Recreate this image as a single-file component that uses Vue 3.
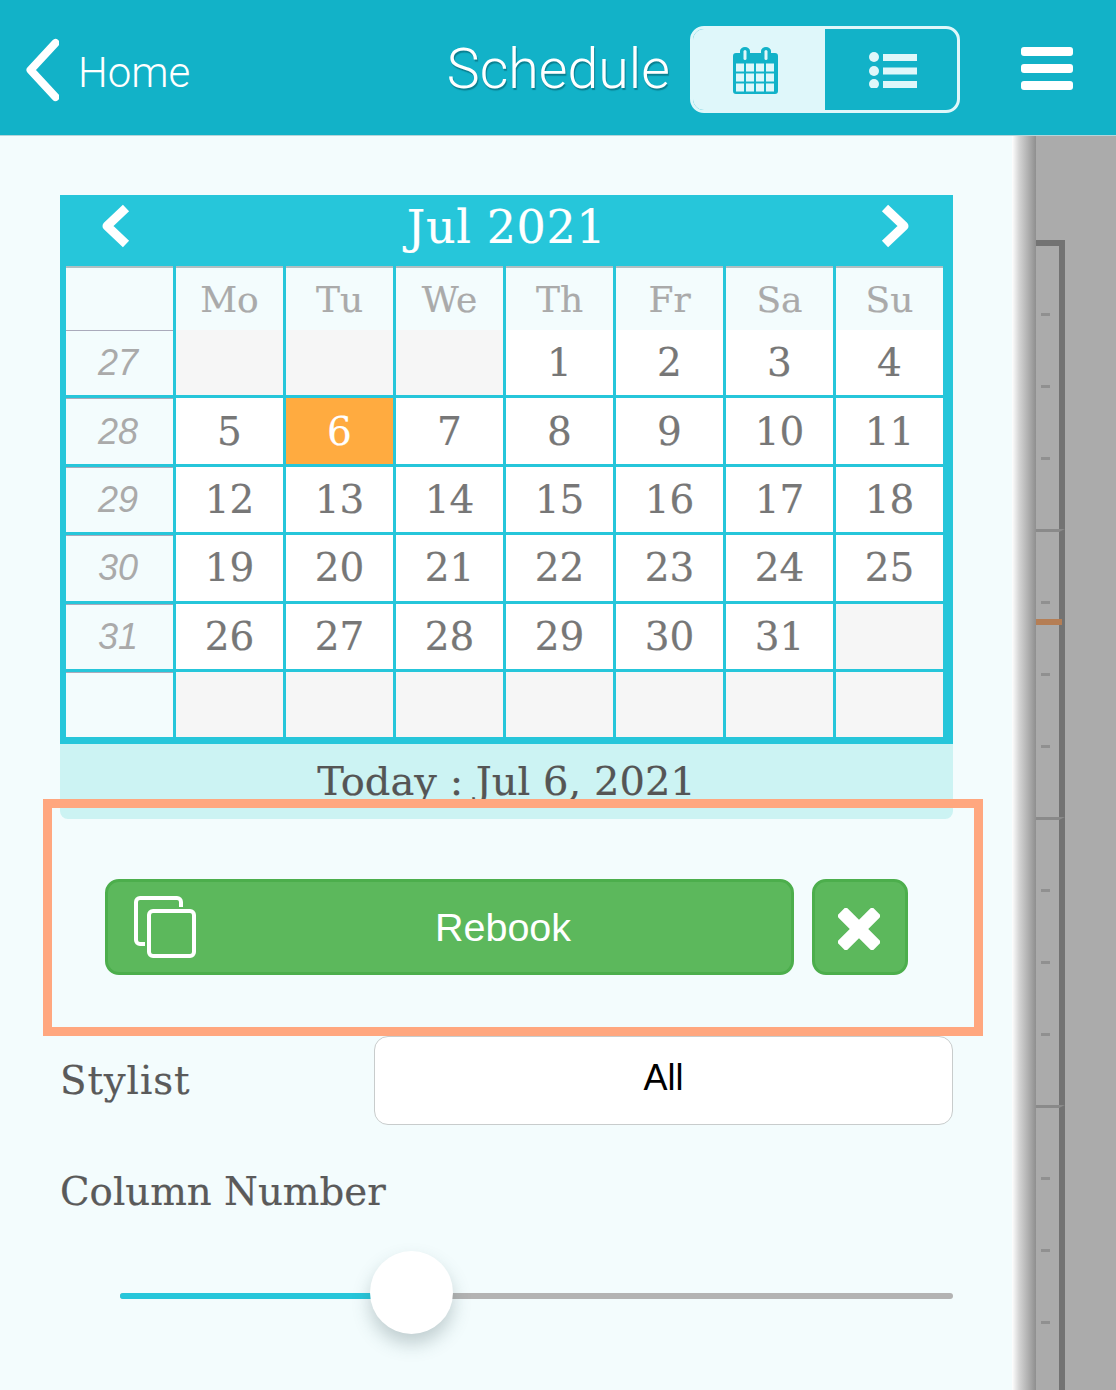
<template>
  <div class="app">
    <header class="topbar">
      <a class="back">
        <svg width="36" height="64" viewBox="0 0 36 64"><path d="M32.500 5 L7.500 32 L32.500 59" fill="none" stroke="#fff" stroke-width="8" stroke-linecap="round" stroke-linejoin="round" /></svg>
        <span>Home</span>
      </a>
      <h1 class="title">Schedule</h1>
      <div class="toggle">
        <div class="toggle-btn on">
          <svg class="cal-icon" width="45" height="47" viewBox="0 0 45 47">
            <path d="M3 6 H7 V4 a5 4 0 0 1 10 0 V6 H28 V4 a5 4 0 0 1 10 0 V6 H42 a3 3 0 0 1 3 3 V44 a3 3 0 0 1 -3 3 H3 a3 3 0 0 1 -3 -3 V9 a3 3 0 0 1 3 -3 Z" fill="#12b2c8" />
            <rect x="10.5" y="3" width="3" height="10" rx="1.5" fill="#dff7fa" />
            <rect x="31.5" y="3" width="3" height="10" rx="1.5" fill="#dff7fa" />
            <g fill="#dff7fa">
              <template v-for="y in [16.5, 26.5, 36.5]" :key="y">
                <rect v-for="x in [3, 13, 23, 33]" :key="x" :x="x" :y="y" width="8" height="8" />
              </template>
            </g>
          </svg>
        </div>
        <div class="toggle-btn">
          <svg class="list-icon" width="48" height="36" viewBox="0 0 48 36" fill="#dff7fa">
            <circle cx="5" cy="5" r="5" /><circle cx="5" cy="19" r="5" /><circle cx="5" cy="32" r="5" />
            <rect x="14" y="2" width="34" height="7" /><rect x="14" y="15.500" width="34" height="7" /><rect x="14" y="29" width="34" height="7" />
          </svg>
        </div>
      </div>
      <div class="burger"><i></i><i></i><i></i></div>
    </header>

    <div class="body">
      <main class="main">
        <section class="calendar">
          <div class="cal-top">
            <svg width="34" height="46" viewBox="0 0 34 46"><path d="M27 5 L8 23 L27 41" fill="none" stroke="#fff" stroke-width="9" stroke-linejoin="round" /></svg>
            <span class="month">Jul 2021</span>
            <svg width="34" height="46" viewBox="0 0 34 46"><path d="M7 5 L26 23 L7 41" fill="none" stroke="#fff" stroke-width="9" stroke-linejoin="round" /></svg>
          </div>
          <div class="cal-head">
            <div class="head-corner"></div>
            <div v-for="d in days" :key="d" class="head-day">{{ d }}</div>
          </div>
          <div class="cal-body">
            <template v-for="w in weeks" :key="w.no">
              <div class="week-no">{{ w.no }}</div>
              <div v-for="(c, i) in w.cells" :key="i" class="cell" :class="{ empty: !c, today: c === 6 }">{{ c }}</div>
            </template>
          </div>
        </section>
        <div class="today-bar">Today : Jul 6, 2021</div>

        <div class="actions">
          <button class="btn rebook">
            <svg width="62" height="62" viewBox="0 0 62 62" fill="none" stroke="#fff" stroke-width="4">
              <path d="M11 48 H6 a4 4 0 0 1 -4 -4 V6 a4 4 0 0 1 4 -4 H43 a4 4 0 0 1 4 4 V11" />
              <rect x="15" y="15" width="45" height="45" rx="4" />
            </svg>
            <span>Rebook</span>
          </button>
          <button class="btn close">
            <svg width="42" height="42" viewBox="0 0 42 42" fill="#fff">
              <rect x="-4" y="14.500" width="50" height="13" rx="2.500" transform="rotate(45 21 21)" />
              <rect x="-4" y="14.500" width="50" height="13" rx="2.500" transform="rotate(-45 21 21)" />
            </svg>
          </button>
        </div>

        <div class="field">
          <label class="label stylist">Stylist</label>
          <div class="select">All</div>
        </div>
        <div class="label column-label">Column Number</div>
        <div class="slider">
          <div class="fill" :style="{ width: sliderPos + 'px' }"></div>
          <div class="thumb" :style="{ left: sliderPos - 42 + 'px' }"></div>
        </div>

        <div class="frame"></div>
      </main>

      <div class="edge"></div>

      <aside class="timeline">
        <div v-for="h in 4" :key="h" class="hour" :class="{ first: h === 1 }">
          <i v-for="t in 3" :key="t" class="tick"></i>
        </div>
        <div class="now"></div>
      </aside>
    </div>
  </div>
</template>

<script setup>
const days = ['Mo', 'Tu', 'We', 'Th', 'Fr', 'Sa', 'Su']
const sliderPos = 292

const weeks = [
  { no: 27, cells: [null, null, null, 1, 2, 3, 4] },
  { no: 28, cells: [5, 6, 7, 8, 9, 10, 11] },
  { no: 29, cells: [12, 13, 14, 15, 16, 17, 18] },
  { no: 30, cells: [19, 20, 21, 22, 23, 24, 25] },
  { no: 31, cells: [26, 27, 28, 29, 30, 31, null] },
  { no: '', cells: [null, null, null, null, null, null, null] }
]
</script>

<style>
html, body { overflow: hidden; }
</style>

<style scoped>
.app { height: 100vh; display: flex; flex-direction: column; background: #ababab; overflow: hidden; font-family: "Liberation Sans", Arial, sans-serif; }

.topbar { height: 131px; padding-top: 4px; flex: none; display: flex; align-items: center; background: #12b2c8; border-bottom: 1px solid #b5d5da; box-sizing: content-box; }
.back { display: flex; align-items: center; margin-left: 23px; color: #fff; font-family: Roboto, sans-serif; font-weight: 300; font-size: 42px; }
.back span { margin: 6px 0 0 19px; }
.title { margin: 0 0 0 auto; color: #fff; font-size: 55.5px; line-height: 1; font-family: Roboto, sans-serif; font-weight: 300; text-shadow: 1px 2px 1px #0a7f90; }
.toggle { display: flex; width: 270px; height: 87px; margin-left: 20px; border: 3px solid #dff7fa; border-radius: 14px; box-sizing: border-box; overflow: hidden; }
.toggle-btn { flex: 1; display: flex; align-items: center; justify-content: center; }
.toggle-btn.on { background: #dff7fa; }
.cal-icon { margin: 2px 8px 0 0; }
.list-icon { margin-left: 3px; }
.burger { width: 52px; display: flex; flex-direction: column; gap: 8px; margin: 0 43px 2px 61px; }
.burger i { display: block; height: 9px; border-radius: 3px; background: #fff; }

.body { flex: 1; display: flex; min-height: 0; }
.main { position: relative; width: 1012px; flex: none; padding: 59px 0 0 60px; box-sizing: border-box; background: #f3fcfd; font-family: "DejaVu Serif", serif; -webkit-text-stroke: 0.2px currentColor; }
.edge { width: 24px; flex: none; background: linear-gradient(to right, #fff, #d4d4d4 30%, #a8a8a8 75%, #8f8f8f); }

.calendar { width: 893px; background: #26c6da; padding-bottom: 6.6px; }
.cal-top { height: 71px; display: flex; align-items: center; justify-content: space-between; padding: 0 41px 9px 39px; box-sizing: border-box; }
.month { color: #fff; font-size: 46px; margin: 2px 0 0 2px; letter-spacing: 0.6px; }
.cal-head, .cal-body { display: grid; grid-template-columns: repeat(8, 107px); column-gap: 3px; padding-left: 6px; }
.cal-head { grid-auto-rows: 64px; }
.head-corner, .head-day { background: #f3fcfd; border-top: 2px solid #b0bfc2; box-sizing: border-box; }
.head-day { display: flex; align-items: center; justify-content: center; color: #aaa; font-size: 36px; }
.cal-body { grid-auto-rows: 65.4px; row-gap: 3px; }
.week-no { display: flex; align-items: center; justify-content: center; background: #f3fcfd; border-top: 1px solid #aab; box-sizing: border-box; color: #aaa; font-family: "Liberation Sans", sans-serif; font-style: italic; font-size: 36px; padding-right: 3px; -webkit-text-stroke: 0; }
.cell { display: flex; align-items: center; justify-content: center; background: #fff; color: #777; font-size: 39px; }
.cell.empty { background: #f6f6f6; }
.cell.today { background: #ffab40; color: #fff; }

.today-bar { width: 893px; height: 75px; padding-top: 16px; box-sizing: border-box; background: #ccf3f3; border-radius: 0 0 8px 8px; color: #555; font-size: 40px; line-height: 42px; text-align: center; }

.actions { display: flex; gap: 18px; margin: 60px 0 0 45px; -webkit-text-stroke: 0; }
.btn { height: 96px; display: flex; align-items: center; border: 3px solid #4cae4c; border-radius: 14px; background: #5cb85c; padding: 0; box-sizing: border-box; color: #fff; }
.rebook { width: 689px; padding-left: 26px; font-family: "Liberation Sans", sans-serif; font-size: 39.5px; }
.rebook span { flex: 1; margin-top: 2px; text-align: center; padding-left: 19px; }
.close { width: 96px; justify-content: center; }
.close svg { margin: 4px 2px 0 0; }

.field { display: flex; align-items: center; justify-content: space-between; width: 893px; margin-top: 61px; }
.label { color: #5a5a5a; font-size: 38.7px; }
.stylist { letter-spacing: 0.9px; }
.select { width: 579px; height: 89px; padding-bottom: 4px; display: flex; align-items: center; justify-content: center; box-sizing: border-box; background: #fff; border: 1px solid #c8cccc; border-radius: 14px; color: #000; font-family: "Liberation Sans", sans-serif; font-size: 36px; -webkit-text-stroke: 0; }
.column-label { margin-top: 42px; line-height: 50px; }

.slider { position: relative; width: 833px; height: 6px; margin: 76px 0 0 60px; background: #b3b3b3; border-radius: 3px; }
.fill { height: 100%; background: #26c6da; border-radius: 3px; }
.thumb { position: absolute; top: -42px; width: 83px; height: 83px; border-radius: 50%; background: #fff; box-shadow: 0 10px 18px rgba(60, 90, 95, 0.28); }

.frame { position: absolute; left: 43px; top: 663px; width: 940px; height: 237px; border: 9px solid #ffa77f; box-sizing: border-box; }

.timeline { position: relative; flex: 1; padding-top: 104px; }
.hour { position: relative; height: 288px; margin-right: 51px; box-sizing: border-box; border-top: 3px solid #8a8a8a; border-right: 6px solid #737373; display: flex; flex-direction: column; }
.hour.first { height: 289px; border-top: 6px solid #737373; }
.hour.first .tick:first-child { margin-top: 67px; }
.tick { display: block; width: 9px; height: 3px; margin: 69px 0 0 5px; background: #909090; }
.now { position: absolute; left: 0; top: 483px; width: 26px; height: 6px; background: #b57e55; }
</style>
